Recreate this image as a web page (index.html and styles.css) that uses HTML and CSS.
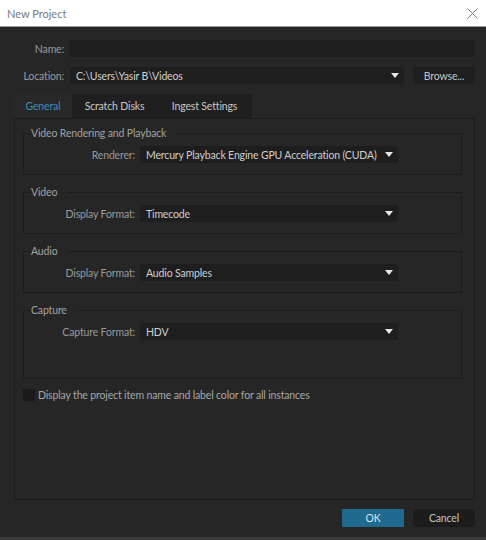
FILE: index.html
```html
<!DOCTYPE html>
<html lang="en">
<head>
  <meta charset="UTF-8">
  <meta name="viewport" content="width=device-width, initial-scale=1.0">
  <title>New Project</title>
  <link rel="stylesheet" href="styles.css">
</head>
<body>
  <div class="titlebar">
    <span class="title">New Project</span>
    <svg class="close" width="11" height="11" viewBox="0 0 11 11">
      <path d="M0.5 0.5 L10.5 10.5 M10.5 0.5 L0.5 10.5" stroke="#7a7a7a" stroke-width="1" fill="none"/>
    </svg>
  </div>

  <div class="dialog">
    <div class="top-row">
      <label class="top-label">Name:</label>
      <div class="input"></div>
    </div>

    <div class="top-row">
      <label class="top-label">Location:</label>
      <div class="select location">
        <span>C:\Users\Yasir B\Videos</span>
        <i class="arrow"></i>
      </div>
      <div class="btn">Browse...</div>
    </div>

    <div class="tabs">
      <div class="tab active tab-general">General</div>
      <div class="tab tab-scratch">Scratch Disks</div>
      <div class="tab tab-ingest">Ingest Settings</div>
    </div>

    <div class="panel">
      <fieldset class="group">
        <legend>Video Rendering and Playback</legend>
        <div class="group-row">
          <label class="group-label">Renderer:</label>
          <div class="select small">
            <span>Mercury Playback Engine GPU Acceleration (CUDA)</span>
            <i class="arrow"></i>
          </div>
        </div>
      </fieldset>

      <fieldset class="group">
        <legend>Video</legend>
        <div class="group-row">
          <label class="group-label">Display Format:</label>
          <div class="select small">
            <span>Timecode</span>
            <i class="arrow"></i>
          </div>
        </div>
      </fieldset>

      <fieldset class="group">
        <legend>Audio</legend>
        <div class="group-row">
          <label class="group-label">Display Format:</label>
          <div class="select small">
            <span>Audio Samples</span>
            <i class="arrow"></i>
          </div>
        </div>
      </fieldset>

      <fieldset class="group group-tall">
        <legend>Capture</legend>
        <div class="group-row">
          <label class="group-label">Capture Format:</label>
          <div class="select small">
            <span>HDV</span>
            <i class="arrow"></i>
          </div>
        </div>
      </fieldset>

      <div class="check-row">
        <span class="checkbox"></span>
        <span class="check-text">Display the project item name and label color for all instances</span>
      </div>
    </div>

    <div class="footer">
      <div class="btn btn-ok">OK</div>
      <div class="btn">Cancel</div>
    </div>
  </div>
</body>
</html>
```

FILE: styles.css
```css
body {
  margin: 0;
  padding: 0;
  width: 486px;
  height: 540px;
  background-color: #262626;
  font-family: Lato, "Noto Sans", sans-serif;
  font-size: 10.5px;
  letter-spacing: -0.15px;
  color: #9c9c9c;
  overflow: hidden;
  white-space: nowrap;
}

.titlebar {
  height: 26px;
  background-color: #ffffff;
  border-bottom: 1px solid #9a9a9a;
  display: flex;
  align-items: center;
  justify-content: space-between;
  padding: 0 7px;
}

.title {
  font-size: 11px;
  letter-spacing: 0;
  color: #7a7a7a;
}

.close {
  margin-right: 1px;
}

.dialog {
  height: 513px;
  padding: 13px 11px 0 14px;
  box-sizing: border-box;
  border-bottom: 3px solid #3c3c3c;
}

.top-row {
  display: flex;
  align-items: center;
  height: 17px;
  margin-bottom: 10px;
}

.top-label {
  width: 50px;
  text-align: right;
  margin-right: 5px;
  color: #9a9a9a;
}

.input {
  flex: 1;
  height: 17px;
  background-color: #1e1e1e;
}

.select {
  display: flex;
  align-items: center;
  justify-content: space-between;
  height: 17px;
  background-color: #1e1e1e;
  color: #cfcfcf;
  padding: 0 5px 0 6px;
  box-sizing: border-box;
}

.select.location {
  width: 334px;
  margin-left: 1px;
}

.select.small {
  width: 258px;
}

.arrow {
  width: 0;
  height: 0;
  border-left: 4px solid transparent;
  border-right: 4px solid transparent;
  border-top: 5px solid #e6e6e6;
}

.btn {
  height: 17px;
  width: 62px;
  display: flex;
  align-items: center;
  justify-content: center;
  background-color: #1e1e1e;
  color: #c4c4c4;
  margin-left: auto;
}

.tabs {
  display: flex;
  height: 24px;
}

.tab {
  display: flex;
  align-items: center;
  justify-content: center;
  background-color: #1f1f1f;
  color: #c8c8c8;
}

.tab.active {
  background-color: #282828;
  color: #3d8cbd;
}

.tab-general {
  width: 58px;
}

.tab-scratch {
  width: 85px;
}

.tab-ingest {
  width: 95px;
}

.panel {
  height: 382px;
  box-sizing: border-box;
  border: 1px solid #1c1c1c;
  padding: 7px 12px 0 8px;
}

.group {
  margin: 0 0 10px 0;
  padding: 6px 0 11px 0;
  border: 1px solid #1c1c1c;
  min-width: 0;
}

.group legend {
  margin-left: 7px;
  padding: 0 10px 0 0;
  line-height: 14px;
  color: #a2a2a2;
}

.group-tall {
  padding-bottom: 38px;
}

.group-row {
  display: flex;
  align-items: center;
}

.group-label {
  width: 111px;
  text-align: right;
  margin-right: 5px;
  color: #9a9a9a;
}

.check-row {
  display: flex;
  align-items: center;
  height: 12px;
}

.checkbox {
  width: 12px;
  height: 12px;
  background-color: #1a1a1a;
  margin-right: 3px;
}

.check-text {
  color: #a6a6a6;
}

.footer {
  display: flex;
  justify-content: flex-end;
  gap: 9px;
  margin-top: 9px;
}

.footer .btn {
  height: 18px;
  margin-left: 0;
  background-color: #1c1c1c;
}

.footer .btn-ok {
  background-color: #1f6a8e;
  color: #d8e6ee;
}
```
